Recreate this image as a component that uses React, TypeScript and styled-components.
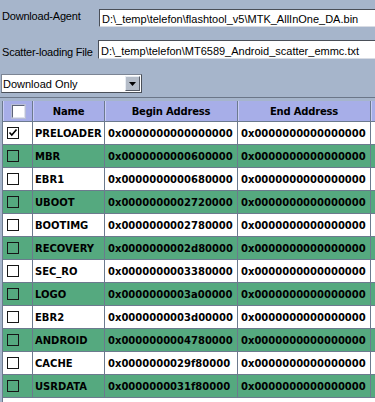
import React from "react";
import styled, { createGlobalStyle } from "styled-components";

const Global = createGlobalStyle`
  html, body { margin: 0; padding: 0; }
  body { background: #a6b5cb; }
`;

const Page = styled.div`
  width: 375px;
  height: 402px;
  overflow: hidden;
  background: #a6b5cb;
  display: flex;
  flex-direction: column;
  font-family: "Liberation Sans", Arial, sans-serif;
  font-size: 11px;
  color: #000;
`;

const FieldRow = styled.div<{ $top: number }>`
  display: flex;
  align-items: flex-start;
  margin-top: ${(p) => p.$top}px;
`;

const Label = styled.div<{ $pad: number; $w: number }>`
  width: ${(p) => p.$w}px;
  padding-left: 2px;
  padding-top: ${(p) => p.$pad}px;
  line-height: 13px;
  letter-spacing: -0.2px;
  white-space: nowrap;
  box-sizing: border-box;
`;

const PathBox = styled.div<{ $h: number; $pad: number }>`
  flex: 1;
  height: ${(p) => p.$h}px;
  box-sizing: border-box;
  background: #fff;
  border-top: 1px solid #4a4f58;
  border-left: 1px solid #4a4f58;
  border-bottom: 1px solid #d8dce4;
  padding-left: 2px;
  padding-top: ${(p) => p.$pad}px;
  line-height: 13px;
  white-space: nowrap;
  overflow: hidden;
`;

const Select = styled.div`
  margin-top: 15px;
  margin-left: 1px;
  width: 141px;
  height: 19px;
  box-sizing: border-box;
  background: #fff;
  border: 1px solid #7c8594;
  border-right-color: #4a4f58;
  border-bottom-color: #4a4f58;
  display: flex;
  align-items: center;
  justify-content: space-between;
`;

const SelectText = styled.span`
  padding-left: 1px;
  line-height: 13px;
  padding-top: 1px;
`;

const DropButton = styled.div`
  width: 15px;
  height: 15px;
  margin-right: 1px;
  box-sizing: border-box;
  background: #b4bcc8;
  border: 1px solid #e8ecf2;
  border-right-color: #555b66;
  border-bottom-color: #555b66;
  display: flex;
  align-items: center;
  justify-content: center;
`;

const Separator = styled.div`
  margin-top: 4px;
  height: 1px;
  background: #6b7688;
`;

const Table = styled.div`
  margin-top: 3px;
  margin-left: 2px;
  flex: 1;
  background: #fff;
  border-left: 1px solid #6c7a8e;
  display: flex;
  flex-direction: column;
  font-family: "DejaVu Sans", Verdana, sans-serif;
  font-weight: bold;
  font-size: 10px;
`;

const Row = styled.div<{ $h: number; $bg: string }>`
  display: grid;
  grid-template-columns: 30px 72px 133px 133px 1fr;
  height: ${(p) => p.$h}px;
  box-sizing: border-box;
  border-bottom: 1px solid #6c7a8e;
  background: ${(p) => p.$bg};
`;

const HeadCell = styled.div`
  border-right: 1px solid #6c7a8e;
  box-shadow: inset 1px 0 0 #c9cdf4;
  display: flex;
  align-items: center;
  justify-content: center;
  white-space: nowrap;
  overflow: hidden;
  letter-spacing: -0.2px;
  &:last-child { border-right: none; }
`;

const Cell = styled.div<{ $pad?: number }>`
  border-right: 1px solid #6c7a8e;
  display: flex;
  align-items: center;
  padding-left: ${(p) => p.$pad ?? 0}px;
  white-space: nowrap;
  overflow: hidden;
  &:last-child { border-right: none; }
`;

const HeadBox = styled.div`
  width: 13px;
  height: 13px;
  margin-left: 1px;
  margin-top: 1px;
  box-sizing: border-box;
  background: #fff;
  border: 1px solid #5d6478;
  border-right-color: #dfe2ee;
  border-bottom-color: #dfe2ee;
  box-shadow: 0 0 0 1px #b9bed6;
`;

const RowBox = styled.div<{ $fill: boolean }>`
  width: 12px;
  height: 12px;
  margin-left: 4px;
  margin-top: -1px;
  box-sizing: border-box;
  border: 1px solid #161616;
  background: ${(p) => (p.$fill ? "#fff" : "transparent")};
  display: flex;
  align-items: center;
  justify-content: center;
`;

type Part = { name: string; begin: string; checked?: boolean };

const parts: Part[] = [
  { name: "PRELOADER", begin: "0x0000000000000000", checked: true },
  { name: "MBR", begin: "0x0000000000600000" },
  { name: "EBR1", begin: "0x0000000000680000" },
  { name: "UBOOT", begin: "0x0000000002720000" },
  { name: "BOOTIMG", begin: "0x0000000002780000" },
  { name: "RECOVERY", begin: "0x0000000002d80000" },
  { name: "SEC_RO", begin: "0x0000000003380000" },
  { name: "LOGO", begin: "0x0000000003a00000" },
  { name: "EBR2", begin: "0x0000000003d00000" },
  { name: "ANDROID", begin: "0x0000000004780000" },
  { name: "CACHE", begin: "0x0000000029f80000" },
  { name: "USRDATA", begin: "0x0000000031f80000" },
];

const GREEN = "#55a97f";

export default function App() {
  return (
    <>
      <Global />
      <Page>
        <FieldRow $top={9}>
          <Label $w={99} $pad={1}>Download-Agent</Label>
          <PathBox $h={18} $pad={3}>
            D:\_temp\telefon\flashtool_v5\MTK_AllInOne_DA.bin
          </PathBox>
        </FieldRow>
        <FieldRow $top={13}>
          <Label $w={98} $pad={6}>Scatter-loading File</Label>
          <PathBox $h={19} $pad={4}>
            D:\_temp\telefon\MT6589_Android_scatter_emmc.txt
          </PathBox>
        </FieldRow>
        <Select>
          <SelectText>Download Only</SelectText>
          <DropButton>
            <svg width="7" height="4" viewBox="0 0 7 4">
              <polygon points="0,0 7,0 3.5,4" fill="#000" />
            </svg>
          </DropButton>
        </Select>
        <Separator />
        <Table>
          <Row $h={21} $bg="#a7aee8">
            <HeadCell>
              <HeadBox />
            </HeadCell>
            <HeadCell>Name</HeadCell>
            <HeadCell>Begin Address</HeadCell>
            <HeadCell>End Address</HeadCell>
            <HeadCell />
          </Row>
          {parts.map((p, i) => {
            const green = i % 2 === 1;
            return (
              <Row key={p.name} $h={23} $bg={green ? GREEN : "#fff"}>
                <Cell>
                  <RowBox $fill={!green}>
                    {p.checked && (
                      <svg width="10" height="10" viewBox="0 0 10 10">
                        <polyline
                          points="1.5,4.5 3.8,7 8.5,1.5"
                          fill="none"
                          stroke="#000"
                          strokeWidth="1.6"
                        />
                      </svg>
                    )}
                  </RowBox>
                </Cell>
                <Cell $pad={2}>{p.name}</Cell>
                <Cell $pad={3}>{p.begin}</Cell>
                <Cell $pad={3}>0x0000000000000000</Cell>
                <Cell />
              </Row>
            );
          })}
        </Table>
      </Page>
    </>
  );
}
